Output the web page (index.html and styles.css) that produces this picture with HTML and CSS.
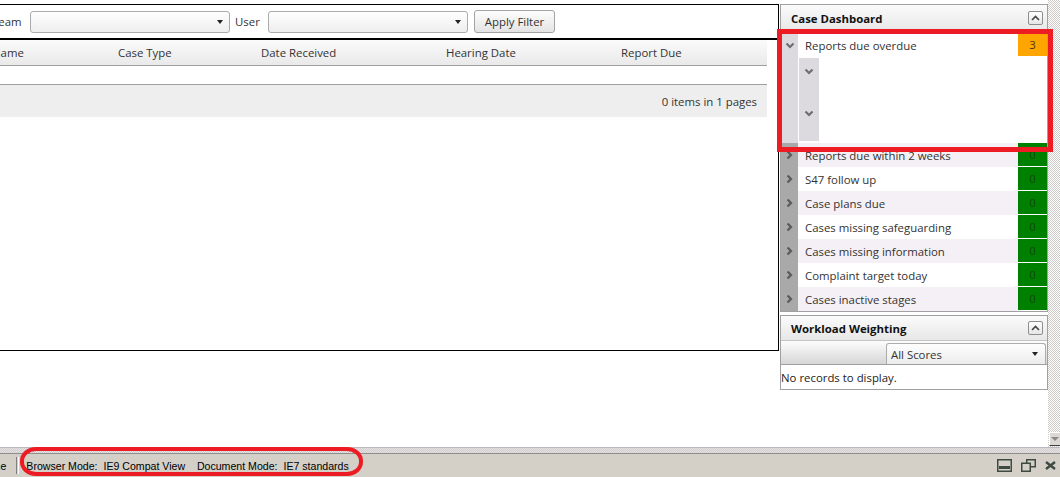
FILE: index.html
```html
<!DOCTYPE html>
<html lang="en">

<head>
    <meta charset="UTF-8">
    <title>Cases</title>
    <link rel="stylesheet" href="styles.css">
</head>

<body>
    <div class="viewport">
        <div class="page">
            <section class="cases">
                <div class="cases-inner">
                    <div class="filters">
                        <label class="lbl team">Team</label>
                        <div class="combo"><span class="arrow"></span></div>
                        <label class="lbl user">User</label>
                        <div class="combo"><span class="arrow"></span></div>
                        <button class="apply">Apply Filter</button>
                    </div>

                    <div class="grid">
                        <div class="grid-head">
                            <span>Name</span>
                            <span>Case Type</span>
                            <span>Date Received</span>
                            <span>Hearing Date</span>
                            <span>Report Due</span>
                        </div>
                        <div class="grid-row"></div>
                        <div class="pager">0 items in 1 pages</div>
                    </div>
                </div>
            </section>

            <aside class="side">
                <div class="panel dash">
                    <div class="panel-head">
                        <span>Case Dashboard</span>
                        <span class="collapse"><svg width="9" height="6" viewBox="0 0 9 6"><polyline points="1,5 4.5,1.5 8,5" /></svg></span>
                    </div>

                    <div class="dash-list">
                        <!-- first item is expanded -->
                        <div class="group">
                            <span class="toggle"><svg width="10" height="7" viewBox="0 0 10 7"><polyline points="1.5,1.5 5,5 8.5,1.5" /></svg></span>
                            <div class="group-body">
                                <div class="item">
                                    <span class="item-name">Reports due overdue</span>
                                    <span class="count amber">3</span>
                                </div>
                                <div class="detail">
                                    <div class="sub-col">
                                        <span class="sub-cell"><svg width="10" height="7" viewBox="0 0 10 7"><polyline points="1.5,1.5 5,5 8.5,1.5" /></svg></span>
                                        <span class="sub-cell"><svg width="10" height="7" viewBox="0 0 10 7"><polyline points="1.5,1.5 5,5 8.5,1.5" /></svg></span>
                                    </div>
                                </div>
                            </div>
                        </div>

                        <div class="item alt">
                            <span class="toggle"><svg width="7" height="10" viewBox="0 0 7 10"><polyline points="1.5,1.5 5,5 1.5,8.5" /></svg></span>
                            <span class="item-name">Reports due within 2 weeks</span>
                            <span class="count">0</span>
                        </div>
                        <div class="item">
                            <span class="toggle"><svg width="7" height="10" viewBox="0 0 7 10"><polyline points="1.5,1.5 5,5 1.5,8.5" /></svg></span>
                            <span class="item-name">S47 follow up</span>
                            <span class="count">0</span>
                        </div>
                        <div class="item alt">
                            <span class="toggle"><svg width="7" height="10" viewBox="0 0 7 10"><polyline points="1.5,1.5 5,5 1.5,8.5" /></svg></span>
                            <span class="item-name">Case plans due</span>
                            <span class="count">0</span>
                        </div>
                        <div class="item">
                            <span class="toggle"><svg width="7" height="10" viewBox="0 0 7 10"><polyline points="1.5,1.5 5,5 1.5,8.5" /></svg></span>
                            <span class="item-name">Cases missing safeguarding</span>
                            <span class="count">0</span>
                        </div>
                        <div class="item alt">
                            <span class="toggle"><svg width="7" height="10" viewBox="0 0 7 10"><polyline points="1.5,1.5 5,5 1.5,8.5" /></svg></span>
                            <span class="item-name">Cases missing information</span>
                            <span class="count">0</span>
                        </div>
                        <div class="item">
                            <span class="toggle"><svg width="7" height="10" viewBox="0 0 7 10"><polyline points="1.5,1.5 5,5 1.5,8.5" /></svg></span>
                            <span class="item-name">Complaint target today</span>
                            <span class="count">0</span>
                        </div>
                        <div class="item alt">
                            <span class="toggle"><svg width="7" height="10" viewBox="0 0 7 10"><polyline points="1.5,1.5 5,5 1.5,8.5" /></svg></span>
                            <span class="item-name">Cases inactive stages</span>
                            <span class="count">0</span>
                        </div>
                    </div>
                </div>

                <div class="panel workload">
                    <div class="panel-head">
                        <span>Workload Weighting</span>
                        <span class="collapse"><svg width="9" height="6" viewBox="0 0 9 6"><polyline points="1,5 4.5,1.5 8,5" /></svg></span>
                    </div>
                    <div class="score-bar">
                        <div class="score-select">All Scores<span class="arrow"></span></div>
                    </div>
                    <div class="empty">No records to display.</div>
                </div>

                <div class="mark-box"></div>
            </aside>
        </div>

        <div class="vscroll">
            <span class="scroll-down"></span>
        </div>
    </div>

    <div class="frame-edge"></div>

    <footer class="statusbar">
        <span class="done">Done</span>
        <span class="sep"></span>
        <span class="modes">Browser Mode:  IE9 Compat View    Document Mode:  IE7 standards</span>
        <span class="win-btns">
            <svg width="15" height="13" viewBox="0 0 15 13"><rect x="0.75" y="0.75" width="13.5" height="11.5" /><rect class="fill" x="2" y="7" width="11" height="3" /></svg>
            <svg width="15" height="13" viewBox="0 0 15 13"><rect x="5.75" y="0.75" width="8.5" height="7" /><rect class="solid" x="0.75" y="4.25" width="8.5" height="8" /></svg>
            <svg width="11" height="9" viewBox="0 0 11 9"><path d="M1 1 L10 8 M10 1 L1 8" /></svg>
        </span>
        <span class="mark-ring"></span>
    </footer>
</body>

</html>
```

FILE: styles.css
```css
body {
    margin: 0;
    width: 1060px;
    height: 477px;
    overflow: hidden;
    background-color: #fff;
    font-family: "Open Sans", sans-serif;
    font-size: 11.4px;
    color: #333;
}

.viewport {
    display: flex;
    height: 447px;
}

.page {
    flex: 1;
    display: flex;
    align-items: flex-start;
    padding-top: 4px;
}

/* case list on the left */
.cases {
    width: 778px;
    height: 345px;
    border-top: 1px solid #000;
    border-right: 1px solid #000;
    border-bottom: 1px solid #000;
    overflow: hidden;
}

.cases-inner {
    margin-left: -8px;
}

.filters {
    display: flex;
    align-items: center;
    height: 33px;
    border-bottom: 2px solid #000;
}

.lbl.team {
    width: 38px;
}

.lbl.user {
    width: 33px;
    margin-left: 5px;
}

.combo {
    box-sizing: border-box;
    width: 200px;
    height: 22px;
    border: 1px solid #acacac;
    border-radius: 3px;
    background: linear-gradient(#fefefe, #eeeeee);
    display: flex;
    align-items: center;
    justify-content: flex-end;
    padding-right: 6px;
}

.arrow {
    width: 0;
    height: 0;
    border-left: 3.5px solid transparent;
    border-right: 3.5px solid transparent;
    border-top: 4px solid #222;
}

.apply {
    box-sizing: border-box;
    margin-left: 6px;
    width: 81px;
    height: 23px;
    border: 1px solid #a3a3a3;
    border-radius: 3px;
    background: linear-gradient(#fdfdfd, #e4e4e4);
    font-family: inherit;
    font-size: inherit;
    color: #333;
    padding: 0;
}

.grid {
    margin-right: 11px;
}

.grid-head {
    display: grid;
    grid-template-columns: 126px 143px 185px 175px 1fr;
    align-items: center;
    height: 25px;
    background: linear-gradient(#fbfbfb, #e9e9e9);
    border-bottom: 1px solid #a0a0a0;
}

.grid-row {
    height: 18px;
    border-bottom: 1px solid #a0a0a0;
}

.pager {
    height: 32px;
    background-color: #eee;
    display: flex;
    align-items: center;
    justify-content: flex-end;
    padding-right: 10px;
}

/* dashboard panels on the right */
.side {
    position: relative;
    width: 268px;
    margin-left: 1px;
}

.panel {
    border: 1px solid #a0a0a0;
}

.panel-head {
    height: 26px;
    display: flex;
    align-items: center;
    justify-content: space-between;
    padding: 0 4px 0 10px;
    background: linear-gradient(#fbfbfb, #e7e7e7);
    border-bottom: 1px solid #c4c4c4;
    font-weight: 700;
    color: #111;
}

.collapse {
    box-sizing: border-box;
    width: 15px;
    height: 14px;
    border: 1px solid #8e8e8e;
    border-radius: 2px;
    background: linear-gradient(#fff, #e6e6e6);
    display: flex;
    align-items: center;
    justify-content: center;
}

.collapse polyline {
    fill: none;
    stroke: #444;
    stroke-width: 1.6;
}

.dash-list {
    padding-top: 1px;
}

.item {
    display: flex;
    height: 24px;
}

.item.alt {
    background-color: #f5f0f5;
}

.toggle {
    width: 17px;
    flex: none;
    background-color: #a9a9a9;
    display: flex;
    align-items: center;
    justify-content: center;
}

.toggle polyline,
.sub-cell polyline {
    fill: none;
    stroke: #5a5a5a;
    stroke-width: 2.2;
}

.item-name {
    flex: 1;
    padding-left: 7px;
    line-height: 25px;
    white-space: nowrap;
}

.count {
    width: 29px;
    height: 23px;
    border-bottom: 1px solid #fff;
    background-color: #008000;
    color: #0b4a0b;
    text-align: center;
    line-height: 24px;
}

.count.amber {
    background-color: #ffa500;
    color: #4a3a1a;
}

.group {
    display: flex;
}

.group .toggle {
    background-color: #dcdadf;
    align-items: flex-start;
    padding-top: 9px;
}

.group .toggle polyline,
.sub-cell polyline {
    stroke: #6e6e6e;
}

.group-body {
    flex: 1;
}

.detail {
    box-sizing: border-box;
    height: 86px;
    padding: 1px 0 2px 1px;
}

.sub-col {
    width: 20px;
    height: 83px;
    background-color: #dcdadf;
    display: flex;
    flex-direction: column;
}

.sub-cell {
    height: 42px;
    display: flex;
    justify-content: center;
    padding-top: 10px;
    box-sizing: border-box;
}

.workload {
    margin-top: 3px;
}

.workload .panel-head {
    height: 24px;
}

.score-bar {
    height: 23px;
    display: flex;
    justify-content: flex-end;
    align-items: flex-end;
    padding-right: 1px;
    background: linear-gradient(#fdfdfd, #d6d6d6);
    border-bottom: 1px solid #a0a0a0;
}

.score-select {
    box-sizing: border-box;
    width: 160px;
    height: 21px;
    border: 1px solid #acacac;
    border-bottom: none;
    border-radius: 3px 3px 0 0;
    background: linear-gradient(#fefefe, #ececec);
    display: flex;
    align-items: center;
    justify-content: space-between;
    padding: 0 7px 0 4px;
}

.empty {
    height: 24px;
    line-height: 25px;
    color: #222;
}

/* annotation box drawn over the expanded item */
.mark-box {
    position: absolute;
    left: -3px;
    top: 25px;
    width: 276px;
    height: 123px;
    box-sizing: border-box;
    border: 5px solid #ed1c24;
}

.vscroll {
    width: 12px;
    display: flex;
    flex-direction: column;
    justify-content: flex-end;
    background: repeating-conic-gradient(#fff 0 25%, #cfcbc8 0 50%) 0 0 / 2px 2px;
}

.scroll-down {
    box-sizing: border-box;
    height: 14px;
    margin: 0 0 1px 1px;
    background-color: #dcd8d4;
    border-left: 1px solid #fff;
    border-top: 1px solid #fff;
    border-bottom: 1px solid #404040;
    display: flex;
    justify-content: center;
    align-items: center;
}

.scroll-down::after {
    content: "";
    border-left: 4px solid transparent;
    border-right: 4px solid transparent;
    border-top: 4px solid #8a8a8a;
}

.frame-edge {
    height: 5px;
    border-top: 1px solid #bdb9c0;
    border-bottom: 1px solid #8e8e8e;
    background: repeating-conic-gradient(#e6e2e2 0 25%, #d2cecf 0 50%) 0 0 / 2px 2px;
}

/* IE status bar */
.statusbar {
    position: relative;
    height: 23px;
    background-color: #d4d0c8;
    display: flex;
    align-items: center;
    font-family: "Liberation Sans", Arial, sans-serif;
    font-size: 10.6px;
    color: #000;
}

.done {
    margin-left: -19px;
}

.sep {
    margin-left: 10px;
    width: 1px;
    height: 17px;
    border-left: 1px solid #808080;
    border-right: 1px solid #fff;
}

.modes {
    margin-left: 7px;
    white-space: pre;
}

.win-btns {
    margin-left: auto;
    margin-right: 4px;
    display: flex;
    align-items: center;
    gap: 9px;
}

.win-btns svg {
    fill: none;
    stroke: #3e4a41;
    stroke-width: 1.5;
}

.win-btns .fill {
    fill: #3e4a41;
    stroke: none;
}

.win-btns .solid {
    fill: #d4d0c8;
}

.win-btns path {
    stroke-width: 2.4;
}

.mark-ring {
    position: absolute;
    left: 20px;
    top: -7px;
    width: 343px;
    height: 29px;
    box-sizing: border-box;
    border: 4px solid #ed1c24;
    border-radius: 16px / 14px;
}
```
